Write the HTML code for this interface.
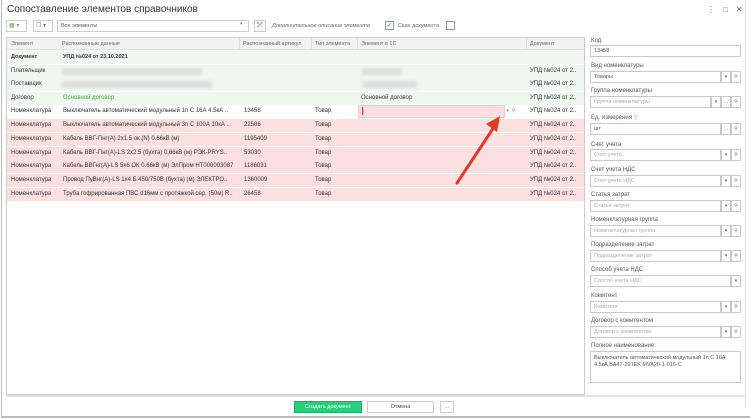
<!DOCTYPE html>
<html><head><meta charset="utf-8"><style>
*{box-sizing:border-box;margin:0;padding:0}
body{width:750px;height:418px;overflow:hidden;background:#fff;font-family:"Liberation Sans",Arial,sans-serif;font-size:6px;color:#333;position:relative}
.a{position:absolute;white-space:nowrap}
.win{position:absolute;left:1px;top:0;width:749px;height:418px;border-left:1px solid #bbb;border-bottom:2px solid #bbb}
.row{position:absolute;left:7px;width:577px;height:13.6px;line-height:13.6px;border-bottom:1px solid #fff}
.row span{position:absolute;top:0;white-space:nowrap;overflow:hidden}
.g{background:#eef8ee}.p{background:#fbe0df}
.lab{position:absolute;left:591px;font-size:6px;color:#555}
.inp{position:absolute;left:590px;height:12px;border:1px solid #c8c8c8;background:#fff;color:#aaa;padding-left:3px;line-height:11px;font-size:5.5px}
.btn{position:absolute;height:12px;width:10px;border:1px solid #c8c8c8;background:#fff;font-size:5px;text-align:center;line-height:10px;color:#666}
.blur{position:absolute;height:7px;background:#ddd;filter:blur(1.5px)}
</style></head><body>
<div class="win"></div>
<div class="a" style="left:7px;top:4px;font-size:10px;color:#333">Сопоставление элементов справочников</div>
<div class="a" style="left:707px;top:5px;font-size:8px;color:#666;letter-spacing:8px">⋮□✕</div>
<!-- toolbar -->
<div class="a" style="left:6px;top:20px;width:21px;height:12px;border:1px solid #ccc;font-size:6px;color:#6a6;line-height:10px;padding-left:2px">▦ ▾</div>
<div class="a" style="left:33px;top:20px;width:20px;height:12px;border:1px solid #ccc;font-size:6px;color:#777;line-height:10px;padding-left:2px">❐ ▾</div>
<div class="a" style="left:57px;top:20px;width:192px;height:12px;border:1px solid #ccc;font-size:5.5px;color:#555;line-height:10px;padding-left:3px">Все элементы</div>
<div class="a" style="left:240px;top:21px;font-size:5px;color:#777">▾</div>
<div class="a" style="left:254px;top:20px;width:12px;height:12px;border:1px solid #ccc;font-size:7px;color:#487;line-height:10px;text-align:center">⤱</div>
<div class="a" style="left:272px;top:23px;font-size:5.5px;font-style:italic;color:#666">Дополнительное описание элемента</div>
<div class="a" style="left:385px;top:21px;width:9px;height:9px;border:1px solid #999;font-size:7px;line-height:7px;color:#393;text-align:center">✓</div>
<div class="a" style="left:398px;top:23px;font-size:5.5px;color:#666">Скан документа</div>
<div class="a" style="left:446px;top:21px;width:9px;height:9px;border:1px solid #999"></div>
<!-- table -->
<div class="a" style="left:6px;top:37px;width:579px;height:358px;border:1px solid #ccc"></div>
<div class="a" style="left:7px;top:38px;width:577px;height:12px;background:#f2f2f2;border-bottom:1px solid #ddd"></div>
<div class="a" style="left:11px;top:41px;font-size:5.5px;color:#666">Элемент</div>
<div class="a" style="left:62px;top:41px;font-size:5.5px;color:#666">Распознанные данные</div>
<div class="a" style="left:243px;top:41px;font-size:5.5px;color:#666">Распознанный артикул</div>
<div class="a" style="left:315px;top:41px;font-size:5.5px;color:#666">Тип элемента</div>
<div class="a" style="left:361px;top:41px;font-size:5.5px;color:#666">Элемент в 1С</div>
<div class="a" style="left:530px;top:41px;font-size:5.5px;color:#666">Документ</div>
<div class="a" style="left:239px;top:38px;width:1px;height:12px;background:#ddd"></div>
<div class="a" style="left:311px;top:38px;width:1px;height:12px;background:#ddd"></div>
<div class="a" style="left:357px;top:38px;width:1px;height:12px;background:#ddd"></div>
<div class="a" style="left:526px;top:38px;width:1px;height:12px;background:#ddd"></div>

<div class="row g" style="top:51px;font-weight:bold;font-size:5.5px"><span style="left:4px">Документ</span><span style="left:56px">УПД №024 от 23.10.2021</span></div>
<div class="row g" style="top:65px"><span style="left:4px">Плательщик</span><span style="left:523px">УПД №024 от 2..</span></div>
<div class="blur" style="left:62px;top:68px;width:140px"></div><div class="blur" style="left:362px;top:68px;width:40px"></div>
<div class="row g" style="top:78px"><span style="left:4px">Поставщик</span><span style="left:523px">УПД №024 от 2..</span></div>
<div class="blur" style="left:62px;top:81px;width:150px"></div><div class="blur" style="left:362px;top:81px;width:55px"></div>
<div class="row g" style="top:92px"><span style="left:4px">Договор</span><span style="left:56px;color:#4a4">Основной договор</span><span style="left:354px">Основной договор</span><span style="left:523px">УПД №024 от 2..</span></div>
<div class="row" style="top:105px;background:#fff"><span style="left:4px">Номенклатура</span><span style="left:56px">Выключатель автоматический модульный 1п C 16А 4.5кА ..</span><span style="left:237px">13458</span><span style="left:308px">Товар</span><span style="left:523px">УПД №024 от 2..</span></div>
<div class="a" style="left:358px;top:105px;width:147px;height:13px;background:#fbe0df;border:1px solid #f3c8c8"></div>
<div class="a" style="left:362px;top:107px;width:1px;height:8px;background:#c33"></div>
<div class="a" style="left:505px;top:105px;width:21px;height:13px;font-size:5px;color:#888;line-height:13px">&nbsp;▾ &nbsp;⚲</div>
<div class="row p" style="top:119px"><span style="left:4px">Номенклатура</span><span style="left:56px">Выключатель автоматический модульный 3п C 100А 10кА ..</span><span style="left:237px">22586</span><span style="left:308px">Товар</span><span style="left:523px">УПД №024 от 2..</span></div>
<div class="row p" style="top:133px"><span style="left:4px">Номенклатура</span><span style="left:56px">Кабель ВВГ-Пнг(А) 2х1.5 ок (N) 0.66кВ (м)</span><span style="left:237px">1195409</span><span style="left:308px">Товар</span><span style="left:523px">УПД №024 от 2..</span></div>
<div class="row p" style="top:147px"><span style="left:4px">Номенклатура</span><span style="left:56px">Кабель ВВГ-Пнг(А)-LS 2х2.5 (бухта) 0,66кВ (м) РЭК-PRYS..</span><span style="left:237px">53030</span><span style="left:308px">Товар</span><span style="left:523px">УПД №024 от 2..</span></div>
<div class="row p" style="top:160px"><span style="left:4px">Номенклатура</span><span style="left:56px">Кабель ВВГнг(А)-LS 5х6 ОК 0.66кВ (м) ЭлПром НТ000003087</span><span style="left:237px">1186031</span><span style="left:308px">Товар</span><span style="left:523px">УПД №024 от 2..</span></div>
<div class="row p" style="top:174px"><span style="left:4px">Номенклатура</span><span style="left:56px">Провод ПуВнг(А)-LS 1х4 Б 450/750В (бухта) (м) ЭЛЕКТРО..</span><span style="left:237px">1360009</span><span style="left:308px">Товар</span><span style="left:523px">УПД №024 от 2..</span></div>
<div class="row p" style="top:188px"><span style="left:4px">Номенклатура</span><span style="left:56px">Труба гофрированная ПВС d16мм с протяжкой сер. (50м) R..</span><span style="left:237px">26458</span><span style="left:308px">Товар</span><span style="left:523px">УПД №024 от 2..</span></div>
<!-- arrow -->
<svg class="a" style="left:0;top:0" width="750" height="418"><line x1="457" y1="183" x2="494" y2="127" stroke="#e03a2e" stroke-width="3" stroke-linecap="round"/><polygon points="500,116 486,124 497,132" fill="#e03a2e"/></svg>
<!-- right panel -->
<div class="lab" style="top:38px">Код</div><div class="inp" style="top:45px;width:151px;color:#555">13458</div>
<div class="lab" style="top:63px">Вид номенклатуры</div><div class="inp" style="top:71px;width:131px;color:#555">Товары</div><div class="btn" style="left:721px;top:71px">▾</div><div class="btn" style="left:731px;top:71px">⚲</div>
<div class="lab" style="top:88px">Группа номенклатуры</div><div class="inp" style="top:96px;width:121px">Группа номенклатуры</div><div class="btn" style="left:711px;top:96px">▾</div><div class="btn" style="left:721px;top:96px">…</div><div class="btn" style="left:731px;top:96px">⚲</div>
<div class="lab" style="top:114px">Ед. измерения <span style="color:#9bd">⚲</span></div><div class="inp" style="top:123px;width:131px;color:#555">шт</div><div class="btn" style="left:721px;top:123px">…</div><div class="btn" style="left:731px;top:123px">⚲</div>
<div class="lab" style="top:142px">Счет учета</div><div class="inp" style="top:149px;width:131px">Счет учета</div><div class="btn" style="left:721px;top:149px">▾</div><div class="btn" style="left:731px;top:149px">⚲</div>
<div class="lab" style="top:167px">Счет учета НДС</div><div class="inp" style="top:175px;width:131px">Счет учета НДС</div><div class="btn" style="left:721px;top:175px">▾</div><div class="btn" style="left:731px;top:175px">⚲</div>
<div class="lab" style="top:192px">Статья затрат</div><div class="inp" style="top:200px;width:131px">Статья затрат</div><div class="btn" style="left:721px;top:200px">▾</div><div class="btn" style="left:731px;top:200px">⚲</div>
<div class="lab" style="top:217px">Номенклатурная группа</div><div class="inp" style="top:225px;width:131px">Номенклатурная группа</div><div class="btn" style="left:721px;top:225px">▾</div><div class="btn" style="left:731px;top:225px">⚲</div>
<div class="lab" style="top:242px">Подразделение затрат</div><div class="inp" style="top:250px;width:131px">Подразделение затрат</div><div class="btn" style="left:721px;top:250px">▾</div><div class="btn" style="left:731px;top:250px">⚲</div>
<div class="lab" style="top:267px">Способ учета НДС</div><div class="inp" style="top:275px;width:141px">Способ учета НДС</div><div class="btn" style="left:731px;top:275px">▾</div>
<div class="lab" style="top:293px">Комитент</div><div class="inp" style="top:301px;width:131px">Комитент</div><div class="btn" style="left:721px;top:301px">▾</div><div class="btn" style="left:731px;top:301px">⚲</div>
<div class="lab" style="top:318px">Договор с комитентом</div><div class="inp" style="top:326px;width:131px">Договор с комитентом</div><div class="btn" style="left:721px;top:326px">▾</div><div class="btn" style="left:731px;top:326px">⚲</div>
<div class="lab" style="top:343px">Полное наименование:</div>
<div class="a" style="left:590px;top:351px;width:151px;height:32px;border:1px solid #c8c8c8;font-size:5.5px;color:#555;white-space:normal;padding:3px;line-height:7px">Выключатель автоматический модульный 1п C 16А 4.5кА ВА47-29 IEK MVA20-1-016-C</div>
<div class="a" style="left:745px;top:0;width:1px;height:408px;background:#e5e5e5"></div>
<!-- bottom -->
<div class="a" style="left:6px;top:395px;width:740px;height:2px;background:#e2e2e2"></div>
<div class="a" style="left:294px;top:401px;width:68px;height:12px;background:#2ecc7a;border:1px solid #1fae63;font-size:5.5px;color:#fff;text-align:center;line-height:10px">Создать документ</div>
<div class="a" style="left:367px;top:401px;width:67px;height:12px;border:1px solid #ccc;font-size:5.5px;color:#444;text-align:center;line-height:10px">Отмена</div>
<div class="a" style="left:440px;top:401px;width:14px;height:12px;border:1px solid #ccc;font-size:5px;color:#666;text-align:center;line-height:10px">...</div>
</body></html>
